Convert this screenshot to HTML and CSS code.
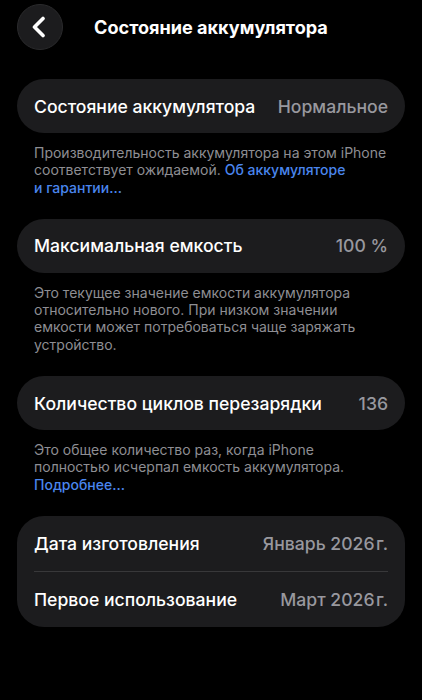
FILE: index.html
```html
<!DOCTYPE html>
<html lang="ru">
<head>
<meta charset="utf-8">
<link rel="stylesheet" href="styles.css">
</head>
<body>
<div class="screen">
  <header class="nav">
    <button class="back" aria-label="Назад">
      <svg width="22" height="22" viewBox="0 0 22 22"><path d="M15 2.5 L6.5 11 L15 19.5" fill="none" stroke="#fff" stroke-width="3.6" stroke-linecap="round" stroke-linejoin="round"/></svg>
    </button>
    <h1 class="title">Состояние аккумулятора</h1>
  </header>

  <section class="group">
    <div class="card">
      <div class="row"><span class="label">Состояние аккумулятора</span><span class="value">Нормальное</span></div>
    </div>
    <p class="note"><span class="nw">Производительность аккумулятора на этом iPhone</span><br><span class="nw">соответствует ожидаемой.</span> <a class="link nw">Об аккумуляторе</a><br><a class="link nw">и гарантии…</a></p>
  </section>

  <section class="group">
    <div class="card">
      <div class="row"><span class="label">Максимальная емкость</span><span class="value">100 %</span></div>
    </div>
    <p class="note">Это текущее значение емкости аккумулятора относительно нового. При низком значении емкости может потребоваться чаще заряжать устройство.</p>
  </section>

  <section class="group">
    <div class="card">
      <div class="row"><span class="label">Количество циклов перезарядки</span><span class="value">136</span></div>
    </div>
    <p class="note"><span>Это общее количество раз, когда iPhone полностью исчерпал емкость аккумулятора.</span><br><a class="link">Подробнее…</a></p>
  </section>

  <section class="group">
    <div class="card card-multi">
      <div class="row"><span class="label">Дата изготовления</span><span class="value">Январь 2026&#8202;г.</span></div>
      <div class="sep"></div>
      <div class="row"><span class="label">Первое использование</span><span class="value">Март 2026&#8202;г.</span></div>
    </div>
  </section>
</div>
</body>
</html>
```
FILE: styles.css
```css
* { box-sizing: border-box; }
html, body { margin: 0; padding: 0; background: #000; }
body {
  font-family: Inter, "Noto Sans", sans-serif;
  color: #fff;
  -webkit-font-smoothing: antialiased;
}
.screen {
  width: 422px;
  height: 700px;
  overflow: hidden;
  padding: 4px 17px 0 17px;
}
.nav {
  display: flex;
  align-items: center;
  height: 46px;
  gap: 31px;
}
.back {
  width: 46px;
  height: 46px;
  border-radius: 50%;
  background: #1c1c1e;
  border: 1px solid #2a2a2c;
  display: flex;
  align-items: center;
  justify-content: center;
  padding: 0 2px 0 0;
}
.title {
  margin: 0;
  font-size: 18.1px;
  font-weight: 700;
}
.group { margin-top: 23px; }
.group:first-of-type { margin-top: 29px; }
.card {
  background: #1c1c1e;
  border-radius: 27px;
  padding: 0 17px;
}
.row {
  display: flex;
  justify-content: space-between;
  align-items: center;
  height: 54px;
  font-size: 17.6px;
  font-weight: 500;
}
.card-multi .row { height: 55px; }
.label { color: #fff; }
.value { color: #98989e; }
.sep { height: 1px; background: #38383a; }
.note {
  margin: 11px 12px 0 17px;
  font-size: 14px;
  font-weight: 400;
  line-height: 17.3px;
  color: #8e8e93;
}
.nw { white-space: nowrap; }
.link { color: #4a86ee; font-weight: 500; }
```
